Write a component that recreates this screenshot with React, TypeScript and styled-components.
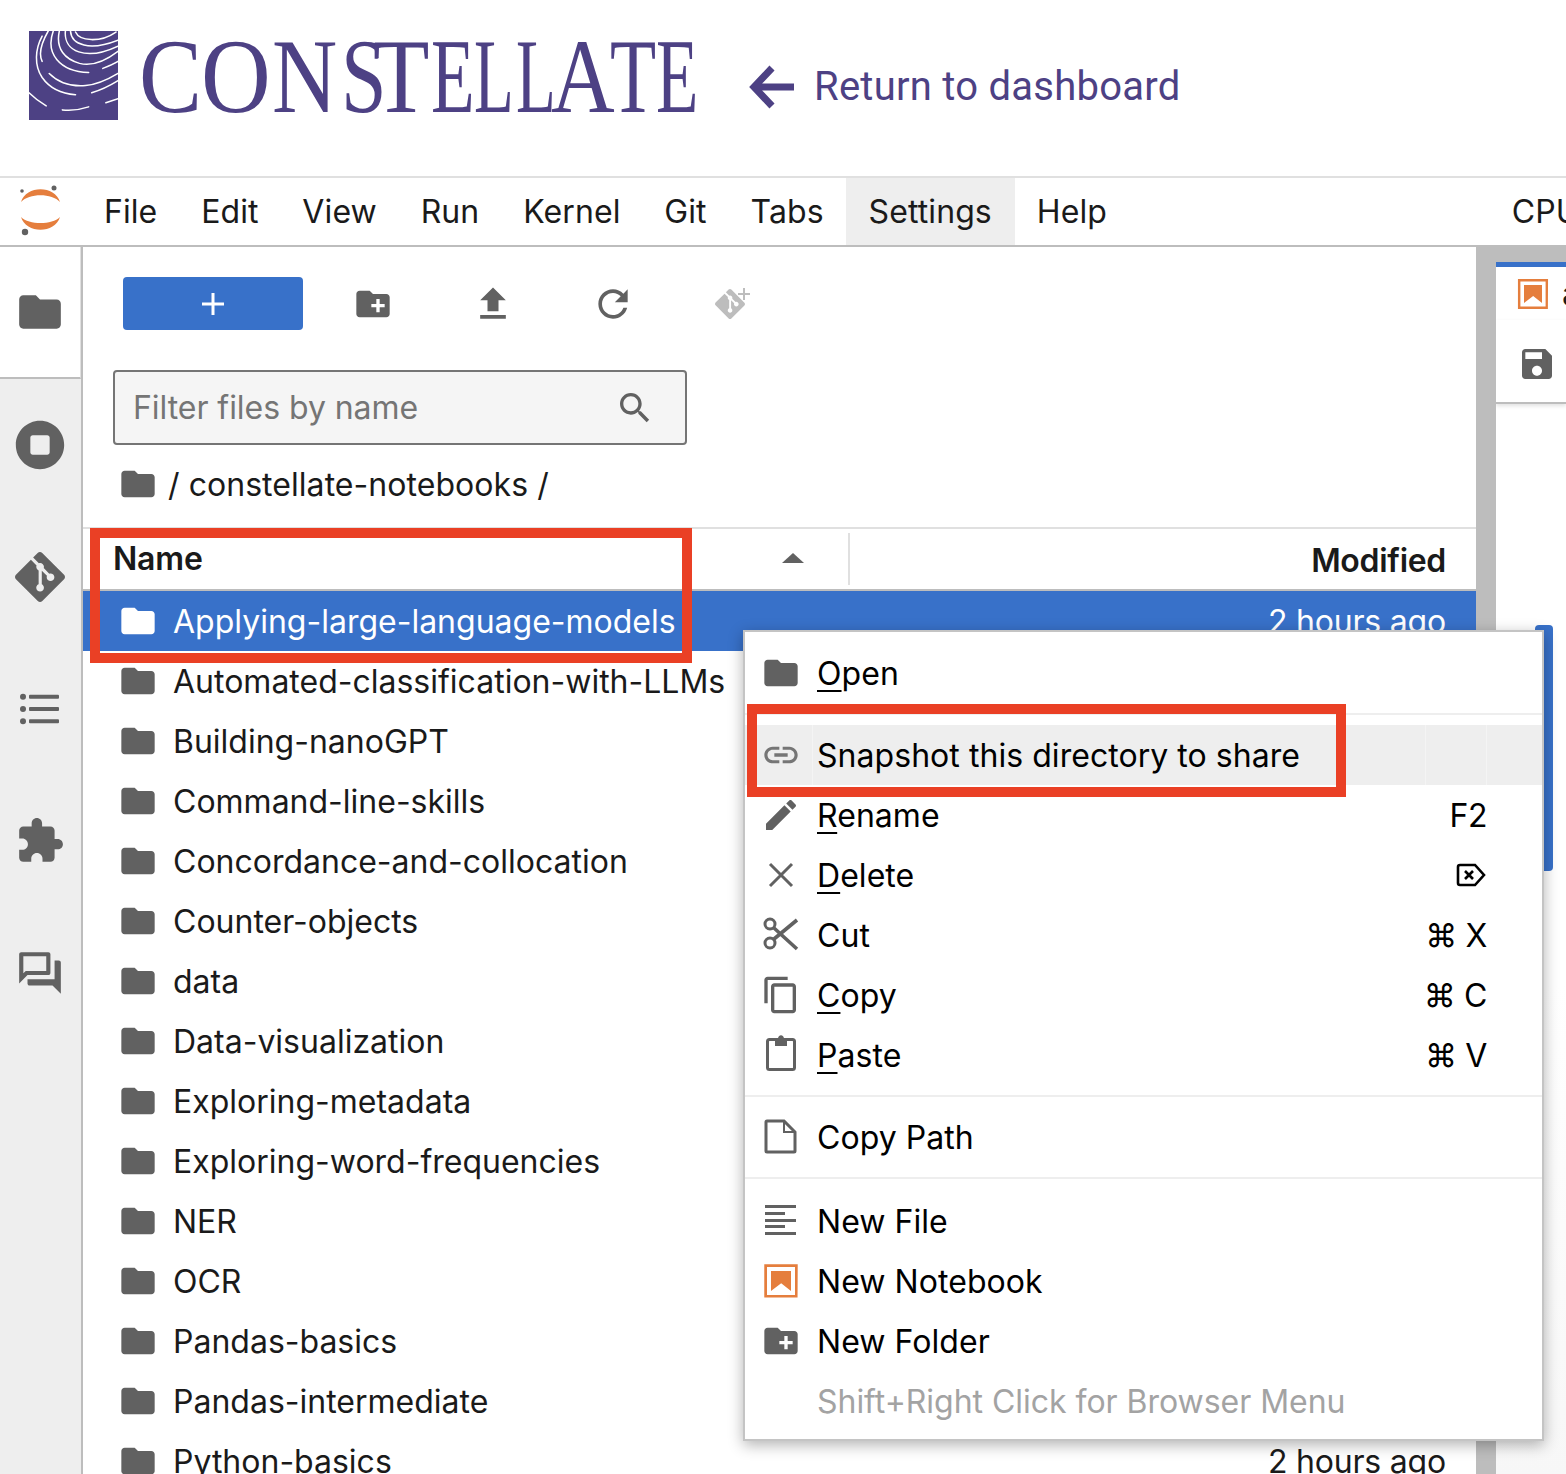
import React from "react";
import styled, { createGlobalStyle } from "styled-components";
import { SiGit } from "react-icons/si";

const UI_FONT = `Inter, "DejaVu Sans", sans-serif`;
const PURPLE = "#4d4184";
const BLUE = "#3871c9";
const GREY = "#616161";

const GlobalStyle = createGlobalStyle`
  html, body {
    margin: 0;
    padding: 0;
    background: #fff;
  }
  * {
    box-sizing: border-box;
  }
`;

const Page = styled.div`
  position: relative;
  width: 1566px;
  height: 1474px;
  overflow: hidden;
  background: #fff;
  font-family: ${UI_FONT};
  color: #1a1a1a;
`;

/* top brand bar */
const Brand = styled.header`
  display: flex;
  align-items: flex-start;
  height: 176px;
  padding: 31px 0 0 29px;
`;

const LogoMark = styled.svg`
  width: 89px;
  height: 89px;
  flex-shrink: 0;
`;

const Wordmark = styled.div`
  display: flex;
  width: 610px;
  height: 100px;
  margin-left: 21px;
  flex-shrink: 0;
  font-family: "Liberation Serif", serif;
  font-size: 105px;
  line-height: 92px;
  color: ${PURPLE};
  white-space: nowrap;
`;

const Letter = styled.span<{ $width: number; $scale: number }>`
  display: block;
  width: ${(p) => p.$width}px;
  transform: scaleX(${(p) => p.$scale});
  transform-origin: left top;
`;

const ReturnLink = styled.a`
  display: flex;
  align-items: center;
  gap: 20px;
  margin-top: 32px;
  font-family: Roboto, sans-serif;
  font-size: 40px;
  line-height: 48px;
  letter-spacing: 0.25px;
  color: ${PURPLE};
  white-space: nowrap;
`;

const BackArrow = styled.svg`
  width: 45px;
  height: 46px;
  flex-shrink: 0;
`;

/* jupyter menu */
const MenuBar = styled.nav`
  display: flex;
  height: 71px;
  border-top: 2px solid #e0e0e0;
  border-bottom: 2px solid #bdbdbd;
  white-space: nowrap;
`;

const JupyterMark = styled.svg`
  width: 82px;
  height: 67px;
  flex-shrink: 0;
`;

const MenuItem = styled.div<{ $active?: boolean }>`
  display: flex;
  align-items: center;
  padding: 0 ${(p) => (p.$active ? "23px" : "21.9px")};
  font-size: 32px;
  letter-spacing: 0.1px;
  flex-shrink: 0;
  background: ${(p) => (p.$active ? "#eeeeee" : "transparent")};
`;

const CpuLabel = styled(MenuItem)`
  margin-left: 361px;
`;

/* main area */
const Main = styled.main`
  display: flex;
  height: 1227px;
`;

const SideBar = styled.aside`
  width: 83px;
  flex-shrink: 0;
  background: #eeeeee;
  border-right: 2px solid #bdbdbd;
`;

const SideTab = styled.div<{ $active?: boolean }>`
  display: flex;
  align-items: center;
  justify-content: center;
  height: 132px;
  padding-right: ${(p) => (p.$active ? "0" : "1px")};
  background: ${(p) => (p.$active ? "#fff" : "transparent")};
  border-bottom: ${(p) => (p.$active ? "2px solid #bdbdbd" : "none")};
  border-right: ${(p) => (p.$active ? "1px solid #e0e0e0" : "none")};
`;

const Glyph = styled.svg<{ $size: number; $color?: string }>`
  width: ${(p) => p.$size}px;
  height: ${(p) => p.$size}px;
  flex-shrink: 0;
  fill: ${(p) => p.$color ?? GREY};
`;

const Outline = styled.svg`
  width: 40px;
  height: 40px;
  flex-shrink: 0;
  overflow: visible;
  fill: none;
  stroke: ${GREY};
  stroke-width: 3;
`;

const FilePanel = styled.section`
  width: 1393px;
  flex-shrink: 0;
  display: flex;
  flex-direction: column;
  & > * {
    flex-shrink: 0;
  }
`;

const Toolbar = styled.div`
  display: flex;
  height: 53px;
  margin: 30px 0 0 40px;
`;

const NewButton = styled.button`
  display: flex;
  align-items: center;
  justify-content: center;
  width: 180px;
  height: 53px;
  margin-right: 10px;
  padding: 0;
  border: 0;
  border-radius: 4px;
  background: ${BLUE};
`;

const PlusMark = styled.svg`
  width: 40px;
  height: 40px;
  stroke: #fff;
  stroke-width: 3;
`;

const ToolButton = styled.div`
  position: relative;
  display: flex;
  align-items: center;
  justify-content: center;
  width: 120px;
`;

const GitShape = styled(SiGit)`
  margin-right: 6px;
`;

const GitAdd = styled.svg`
  position: absolute;
  left: 65px;
  top: 11px;
  width: 12px;
  height: 12px;
  stroke: #bdbdbd;
  stroke-width: 2;
`;

const FilterBox = styled.div`
  display: flex;
  align-items: center;
  justify-content: space-between;
  width: 574px;
  height: 75px;
  margin: 40px 0 0 30px;
  padding: 0 30px 0 18px;
  border: 2px solid #757575;
  border-radius: 4px;
  background: #f5f5f5;
  color: #757575;
  font-size: 32px;
  letter-spacing: -0.05px;
`;

const Crumbs = styled.div`
  display: flex;
  align-items: center;
  gap: 10px;
  height: 82px;
  padding: 0 0 4px 35px;
  font-size: 32px;
  letter-spacing: 0.05px;
`;

const ListHeader = styled.div`
  display: flex;
  align-items: center;
  height: 64px;
  border-top: 2px solid #e0e0e0;
  border-bottom: 2px solid #bdbdbd;
  font-size: 32px;
  font-weight: 600;
  letter-spacing: -0.2px;
`;

const NameColumn = styled.div`
  display: flex;
  align-items: center;
  justify-content: space-between;
  width: 767px;
  height: 52px;
  padding: 0 44px 2px 30px;
  border-right: 2px solid #e0e0e0;
`;

const SortArrow = styled.span`
  width: 0;
  height: 0;
  border-left: 11px solid transparent;
  border-right: 11px solid transparent;
  border-bottom: 10px solid ${GREY};
`;

const ModifiedColumn = styled.div`
  flex: 1;
  padding: 3px 30px 0 0;
  text-align: right;
  letter-spacing: -0.3px;
`;

const Row = styled.div<{ $selected?: boolean }>`
  display: flex;
  align-items: center;
  height: 60px;
  padding: 0 30px 0 35px;
  background: ${(p) => (p.$selected ? BLUE : "#fff")};
  color: ${(p) => (p.$selected ? "#fff" : "#1a1a1a")};
  font-size: 32px;
`;

const RowName = styled.span`
  flex: 1;
  margin-left: 15px;
`;

const RowTime = styled.span`
  letter-spacing: -0.2px;
`;

const Splitter = styled.div`
  width: 20px;
  flex-shrink: 0;
  background: #bdbdbd;
`;

const DocArea = styled.section`
  position: relative;
  flex: 1;
  overflow: hidden;
  background: linear-gradient(#fff 60%, #f7f7f7);
`;

const TabStrip = styled.div`
  height: 73px;
  padding: 15px 0 0 0;
  background: #bdbdbd;
`;

const DocTab = styled.div`
  display: flex;
  align-items: center;
  gap: 11px;
  height: 58px;
  padding-left: 19px;
  border-top: 5px solid ${BLUE};
  background: #fff;
  font-size: 32px;
  white-space: nowrap;
`;

const DocTools = styled.div`
  display: flex;
  align-items: center;
  height: 84px;
  padding: 6px 0 0 21px;
  border-bottom: 2px solid #bdbdbd;
  box-shadow: 0 2px 4px rgba(0, 0, 0, 0.12);
`;

const ScrollThumb = styled.div`
  position: absolute;
  left: 39px;
  top: 378px;
  width: 18px;
  height: 246px;
  border-radius: 4px;
  background: ${BLUE};
`;

/* context menu */
const ContextMenu = styled.div`
  position: absolute;
  left: 743px;
  top: 630px;
  width: 801px;
  height: 811px;
  padding: 11px 0;
  border: 2px solid #c4c4c4;
  background: #fff;
  box-shadow: 0 4px 14px rgba(0, 0, 0, 0.3);
  font-size: 32px;
  letter-spacing: 0.05px;
  color: #000;
`;

const Item = styled.div`
  display: grid;
  grid-template-columns: 67px 613px 62px 1fr;
  height: 60px;
`;

const IconCell = styled.div<{ $active?: boolean }>`
  display: flex;
  align-items: center;
  padding-left: 16px;
  background: ${(p) => (p.$active ? "#eeeeee" : "transparent")};
`;

const LabelCell = styled.div<{ $active?: boolean; $disabled?: boolean }>`
  display: flex;
  align-items: center;
  padding-left: 4px;
  white-space: nowrap;
  letter-spacing: ${(p) => (p.$disabled ? "-0.03px" : "inherit")};
  color: ${(p) => (p.$disabled ? "#a3a3a3" : "#000")};
  background: ${(p) => (p.$active ? "#eeeeee" : "transparent")};
  border-left: 1px solid ${(p) => (p.$active ? "#f4f4f4" : "transparent")};
`;

const ShortcutCell = styled.div<{ $active?: boolean }>`
  display: flex;
  align-items: center;
  justify-content: flex-end;
  white-space: nowrap;
  background: ${(p) => (p.$active ? "#eeeeee" : "transparent")};
  border-left: 1px solid ${(p) => (p.$active ? "#f4f4f4" : "transparent")};
  border-right: 1px solid ${(p) => (p.$active ? "#f4f4f4" : "transparent")};
`;

const ShortcutText = styled.span`
  margin-right: -1px;
  letter-spacing: -0.4px;
`;

const EndCell = styled.div<{ $active?: boolean }>`
  background: ${(p) => (p.$active ? "#eeeeee" : "transparent")};
`;

const Mnemonic = styled.span`
  text-decoration: underline;
  text-decoration-thickness: 2px;
  text-underline-offset: 5px;
`;

const Separator = styled.div<{ $tall?: boolean }>`
  height: ${(p) => (p.$tall ? "24px" : "22px")};
  padding-top: 10px;
  &::after {
    content: "";
    display: block;
    height: 2px;
    background: #eeeeee;
  }
`;

const BackspaceKey = styled.svg`
  width: 30px;
  height: 26px;
  fill: none;
  stroke: #000;
  stroke-width: 2.6;
`;

/* the red annotation boxes drawn over the screenshot */
const Callout = styled.div<{ $left: number; $top: number; $width: number; $height: number }>`
  position: absolute;
  left: ${(p) => p.$left}px;
  top: ${(p) => p.$top}px;
  width: ${(p) => p.$width}px;
  height: ${(p) => p.$height}px;
  border: 10px solid #ea4025;
`;

const P = {
  folder: "M10 4H4c-1.1 0-1.99.9-1.99 2L2 18c0 1.1.9 2 2 2h16c1.1 0 2-.9 2-2V8c0-1.1-.9-2-2-2h-8l-2-2z",
  newFolder:
    "M20 6h-8l-2-2H4c-1.11 0-1.99.89-1.99 2L2 18c0 1.11.89 2 2 2h16c1.11 0 2-.89 2-2V8c0-1.11-.89-2-2-2zm-1 8h-3v3h-2v-3h-3v-2h3V9h2v3h3v2z",
  upload: "M9 16h6v-6h4l-7-7-7 7h4zm-4 2h14v2H5z",
  refresh:
    "M17.65 6.35C16.2 4.9 14.21 4 12 4c-4.42 0-7.99 3.58-7.99 8s3.57 8 7.99 8c3.73 0 6.84-2.55 7.73-6h-2.08c-.82 2.33-3.04 4-5.65 4-3.31 0-6-2.69-6-6s2.69-6 6-6c1.66 0 3.14.69 4.22 1.78L13 11h7V4l-2.35 2.35z",
  search:
    "M15.5 14h-.79l-.28-.27C15.41 12.59 16 11.11 16 9.5 16 5.91 13.09 3 9.5 3S3 5.91 3 9.5 5.91 16 9.5 16c1.61 0 3.09-.59 4.23-1.57l.27.28v.79l5 4.99L20.49 19l-4.99-5zm-6 0C7.01 14 5 11.99 5 9.5S7.01 5 9.5 5 14 7.01 14 9.5 11.99 14 9.5 14z",
  stop: "M12 2C6.48 2 2 6.48 2 12s4.48 10 10 10 10-4.48 10-10S17.52 2 12 2zm4 13c0 .55-.45 1-1 1H9c-.55 0-1-.45-1-1V9c0-.55.45-1 1-1h6c.55 0 1 .45 1 1v6z",
  puzzle:
    "M20.5 11H19V7c0-1.1-.9-2-2-2h-4V3.5C13 2.12 11.88 1 10.5 1S8 2.12 8 3.5V5H4c-1.1 0-1.99.9-1.99 2v3.8H3.5c1.49 0 2.7 1.21 2.7 2.7s-1.21 2.7-2.7 2.7H2V20c0 1.1.9 2 2 2h3.8v-1.5c0-1.49 1.21-2.7 2.7-2.7 1.49 0 2.7 1.21 2.7 2.7V22H17c1.1 0 2-.9 2-2v-4h1.5c1.38 0 2.5-1.12 2.5-2.5S21.88 11 20.5 11z",
  chat: "M15 4v7H5.17L4 12.17V4h11m1-2H3c-.55 0-1 .45-1 1v14l4-4h10c.55 0 1-.45 1-1V3c0-.55-.45-1-1-1zm5 4h-2v9H6v2c0 .55.45 1 1 1h11l4 4V7c0-.55-.45-1-1-1z",
  link: "M3.9 12c0-1.71 1.39-3.1 3.1-3.1h4V7H7c-2.76 0-5 2.24-5 5s2.24 5 5 5h4v-1.9H7c-1.71 0-3.1-1.39-3.1-3.1zM8 13h8v-2H8v2zm9-6h-4v1.9h4c1.71 0 3.1 1.39 3.1 3.1s-1.39 3.1-3.1 3.1h-4V17h4c2.76 0 5-2.24 5-5s-2.24-5-5-5z",
  edit: "M3 17.25V21h3.75L17.81 9.94l-3.75-3.75L3 17.25zM20.71 7.04c.39-.39.39-1.02 0-1.41l-2.34-2.34c-.39-.39-1.02-.39-1.41 0l-1.83 1.83 3.75 3.75 1.83-1.83z",
  copy: "M16 1H4c-1.1 0-2 .9-2 2v14h2V3h12V1zm3 4H8c-1.1 0-2 .9-2 2v14c0 1.1.9 2 2 2h11c1.1 0 2-.9 2-2V7c0-1.1-.9-2-2-2zm0 16H8V7h11v14z",
  save: "M17 3H5c-1.11 0-2 .9-2 2v14c0 1.1.89 2 2 2h14c1.1 0 2-.9 2-2V7l-4-4zm-5 16c-1.66 0-3-1.34-3-3s1.34-3 3-3 3 1.34 3 3-1.34 3-3 3zm3-10H5V5h10v4z",
};

const Icon = ({ d, size, color }: { d: string; size: number; color?: string }) => (
  <Glyph viewBox="0 0 24 24" $size={size} $color={color}>
    <path d={d} />
  </Glyph>
);

const NotebookIcon = ({ size }: { size: number }) => (
  <Glyph viewBox="0 0 22 22" $size={size} $color="#e57e3d">
    <path d="M18.7 3.3v15.4H3.3V3.3h15.4m1.5-1.5H1.8v18.3h18.3l.1-18.3z" />
    <path d="M16.5 16.5l-5.4-4.3-5.6 4.3v-11h11z" />
  </Glyph>
);

const ListIcon = () => (
  <Glyph viewBox="0 0 50 50" $size={50}>
    <circle cx="8" cy="12.7" r="3" />
    <circle cx="8" cy="25" r="3" />
    <circle cx="8" cy="37.3" r="3" />
    <rect x="14" y="10.7" width="30" height="4" rx="1" />
    <rect x="14" y="23" width="30" height="4" rx="1" />
    <rect x="14" y="35.3" width="30" height="4" rx="1" />
  </Glyph>
);

const CloseIcon = () => (
  <Outline viewBox="0 0 40 40">
    <path d="M9 9l22 22M31 9L9 31" />
  </Outline>
);

const CutIcon = () => (
  <Outline viewBox="0 0 40 40">
    <circle cx="9" cy="9" r="5" />
    <circle cx="9" cy="28" r="5" />
    <path d="M13 13l23 21M13 24L36 5" strokeWidth="3.6" />
  </Outline>
);

const PasteIcon = () => (
  <Outline viewBox="0 0 40 40">
    <rect x="6.5" y="4.5" width="27" height="30" rx="2" />
    <path d="M14 11V4h3c0-5 6-5 6 0h3v7z" fill={GREY} stroke="none" />
  </Outline>
);

const FileIcon = () => (
  <Outline viewBox="0 0 40 40">
    <path d="M6 4h17l11 11v19a1 1 0 0 1-1 1H6a1 1 0 0 1-1-1V5a1 1 0 0 1 1-1z" />
    <path d="M23 4v11h11" strokeWidth="2" />
  </Outline>
);

const TextIcon = () => (
  <Glyph viewBox="0 0 40 40" $size={40}>
    <rect x="4" y="4" width="31" height="3" />
    <rect x="4" y="11" width="20" height="3" />
    <rect x="4" y="18" width="31" height="3" />
    <rect x="4" y="24" width="20" height="3" />
    <rect x="4" y="31" width="31" height="3" />
  </Glyph>
);

const ConstellateMark = () => (
  <LogoMark viewBox="0 0 88 88">
    <rect width="88" height="88" fill={PURPLE} />
    <g fill="none" stroke="#fff" strokeWidth="1.5" strokeLinecap="round">
      <path d="M46 1C50 10 70 12 86 1" />
      <path d="M41 0C42 14 60 20 88 9" />
      <path d="M36 0C34 20 56 30 88 15" />
      <path d="M30 0C26 18 36 28 50 32 62 35 75 30 88 20" />
      <path d="M24 0C16 22 30 40 59 41" />
      <path d="M73 37C78 35 83 33 88 30" />
      <path d="M19 0C11 14 10 24 13 30" />
      <path d="M13 5C6 18 5 34 13 46 20 56 32 62 46 63" />
      <path d="M20 42C30 52 44 55 56 54 68 53 78 48 88 42" />
      <path d="M62 61C72 58 80 54 88 49" />
      <path d="M0 61C6 67 12 71 17 74" />
      <path d="M33 78C42 79 50 78 59 75" />
      <path d="M76 71L88 67" />
    </g>
  </LogoMark>
);

const JupyterLogo = () => (
  <JupyterMark viewBox="0 0 82 67">
    <path d="M21 24C26 7 55 7 60 24 52 15 29 15 21 24z" fill="#e57e3d" />
    <path d="M21 39C26 56 55 56 60 39 52 47 29 47 21 39z" fill="#e57e3d" />
    <circle cx="54" cy="10" r="2.5" fill={GREY} />
    <circle cx="22" cy="13" r="1.8" fill={GREY} />
    <circle cx="25" cy="54" r="3.2" fill={GREY} />
  </JupyterMark>
);

// the logo lettering is tightly set, each letter has its own advance and squeeze
const wordmarkLetters: [string, number, number][] = [
  ["C", 62, 0.9],
  ["O", 71, 0.92],
  ["N", 69, 0.86],
  ["S", 32, 0.78],
  ["T", 58, 0.88],
  ["E", 43, 0.68],
  ["L", 42, 0.62],
  ["L", 35, 0.62],
  ["A", 59, 0.84],
  ["T", 46, 0.72],
  ["E", 40, 0.66],
];

const folders = [
  "Applying-large-language-models",
  "Automated-classification-with-LLMs",
  "Building-nanoGPT",
  "Command-line-skills",
  "Concordance-and-collocation",
  "Counter-objects",
  "data",
  "Data-visualization",
  "Exploring-metadata",
  "Exploring-word-frequencies",
  "NER",
  "OCR",
  "Pandas-basics",
  "Pandas-intermediate",
  "Python-basics",
];

const menuBarItems = ["File", "Edit", "View", "Run", "Kernel", "Git", "Tabs", "Settings", "Help"];

const MenuRow = ({
  icon,
  shortcut,
  active,
  disabled,
  children,
}: {
  icon?: React.ReactNode;
  shortcut?: React.ReactNode;
  active?: boolean;
  disabled?: boolean;
  children: React.ReactNode;
}) => (
  <Item>
    <IconCell $active={active}>{icon}</IconCell>
    <LabelCell $active={active} $disabled={disabled}>
      <span>{children}</span>
    </LabelCell>
    <ShortcutCell $active={active}>{shortcut}</ShortcutCell>
    <EndCell $active={active} />
  </Item>
);

export default function App() {
  return (
    <Page>
      <GlobalStyle />
      <Brand>
        <ConstellateMark />
        <Wordmark>
          {wordmarkLetters.map(([char, width, scale], index) => (
            <Letter key={index} $width={width} $scale={scale}>
              {char}
            </Letter>
          ))}
        </Wordmark>
        <ReturnLink>
          <BackArrow viewBox="0 0 45 46" fill="none" stroke={PURPLE} strokeWidth="7">
            <path d="M45 23H6M23 4L5 23l18 19" />
          </BackArrow>
          Return to dashboard
        </ReturnLink>
      </Brand>

      <MenuBar>
        <JupyterLogo />
        {menuBarItems.map((item) => (
          <MenuItem key={item} $active={item === "Settings"}>
            {item}
          </MenuItem>
        ))}
        <CpuLabel>CPU</CpuLabel>
      </MenuBar>

      <Main>
        <SideBar>
          <SideTab $active>
            <Icon d={P.folder} size={50} />
          </SideTab>
          <SideTab>
            <Icon d={P.stop} size={58} />
          </SideTab>
          <SideTab>
            <SiGit size={50} color={GREY} />
          </SideTab>
          <SideTab>
            <ListIcon />
          </SideTab>
          <SideTab>
            <Icon d={P.puzzle} size={50} />
          </SideTab>
          <SideTab>
            <Icon d={P.chat} size={50} />
          </SideTab>
        </SideBar>

        <FilePanel>
          <Toolbar>
            <NewButton>
              <PlusMark viewBox="0 0 40 40">
                <path d="M20 9v22M9 20h22" />
              </PlusMark>
            </NewButton>
            <ToolButton>
              <Icon d={P.newFolder} size={40} />
            </ToolButton>
            <ToolButton>
              <Icon d={P.upload} size={44} />
            </ToolButton>
            <ToolButton>
              <Icon d={P.refresh} size={44} />
            </ToolButton>
            <ToolButton>
              <GitShape size={30} color="#bdbdbd" />
              <GitAdd viewBox="0 0 12 12">
                <path d="M6 0v12M0 6h12" />
              </GitAdd>
            </ToolButton>
          </Toolbar>

          <FilterBox>
            <span>Filter files by name</span>
            <Icon d={P.search} size={40} />
          </FilterBox>

          <Crumbs>
            <Icon d={P.folder} size={40} />
            <span>/ constellate-notebooks /</span>
          </Crumbs>

          <ListHeader>
            <NameColumn>
              <span>Name</span>
              <SortArrow />
            </NameColumn>
            <ModifiedColumn>Modified</ModifiedColumn>
          </ListHeader>

          {folders.map((name, index) => (
            <Row key={name} $selected={index === 0}>
              <Icon d={P.folder} size={40} color={index === 0 ? "#fff" : GREY} />
              <RowName>{name}</RowName>
              {(index === 0 || index === folders.length - 1) && <RowTime>2 hours ago</RowTime>}
            </Row>
          ))}
        </FilePanel>

        <Splitter />

        <DocArea>
          <TabStrip>
            <DocTab>
              <NotebookIcon size={36} />a
            </DocTab>
          </TabStrip>
          <DocTools>
            <Icon d={P.save} size={40} />
          </DocTools>
          <ScrollThumb />
        </DocArea>
      </Main>

      <ContextMenu>
        <MenuRow icon={<Icon d={P.folder} size={40} />}>
          <Mnemonic>O</Mnemonic>pen
        </MenuRow>
        <Separator />
        <MenuRow active icon={<Icon d={P.link} size={40} color="#757575" />}>
          Snapshot this directory to share
        </MenuRow>
        <MenuRow icon={<Icon d={P.edit} size={40} />} shortcut={<ShortcutText>F2</ShortcutText>}>
          <Mnemonic>R</Mnemonic>ename
        </MenuRow>
        <MenuRow
          icon={<CloseIcon />}
          shortcut={
            <BackspaceKey viewBox="0 0 30 26">
              <path d="M4 3h15l9 10-9 10H4a2 2 0 0 1-2-2V5a2 2 0 0 1 2-2z" />
              <path d="M9 9l8 8M17 9l-8 8" />
            </BackspaceKey>
          }
        >
          <Mnemonic>D</Mnemonic>elete
        </MenuRow>
        <MenuRow icon={<CutIcon />} shortcut={<ShortcutText>⌘ X</ShortcutText>}>
          Cut
        </MenuRow>
        <MenuRow icon={<Icon d={P.copy} size={40} />} shortcut={<ShortcutText>⌘ C</ShortcutText>}>
          <Mnemonic>C</Mnemonic>opy
        </MenuRow>
        <MenuRow icon={<PasteIcon />} shortcut={<ShortcutText>⌘ V</ShortcutText>}>
          <Mnemonic>P</Mnemonic>aste
        </MenuRow>
        <Separator />
        <MenuRow icon={<FileIcon />}>Copy Path</MenuRow>
        <Separator $tall />
        <MenuRow icon={<TextIcon />}>New File</MenuRow>
        <MenuRow icon={<NotebookIcon size={40} />}>New Notebook</MenuRow>
        <MenuRow icon={<Icon d={P.newFolder} size={40} />}>New Folder</MenuRow>
        <MenuRow disabled>Shift+Right Click for Browser Menu</MenuRow>
      </ContextMenu>

      <Callout $left={90} $top={528} $width={602} $height={135} />
      <Callout $left={747} $top={704} $width={599} $height={93} />
    </Page>
  );
}
